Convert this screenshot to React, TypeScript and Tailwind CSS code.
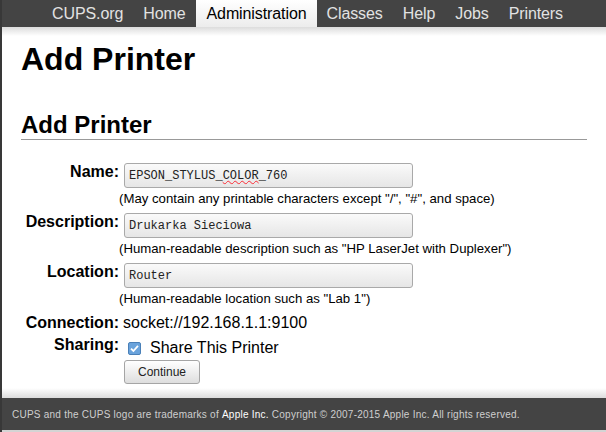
const navItems = ["CUPS.org", "Home", "Administration", "Classes", "Help", "Jobs", "Printers"];

function TextBox({ children }: { children: React.ReactNode }) {
  return (
    <div className="ml-[5px] flex h-[25px] w-[289px] items-center rounded-[3px] border border-[#a9a9a9] bg-gradient-to-b from-[#fafafa] to-[#e6e6e6] pl-[4px] font-['Liberation_Mono',monospace] text-[12px] text-[#222]">
      {children}
    </div>
  );
}

function Field({ label, help, children }: { label: string; help: string; children: React.ReactNode }) {
  return (
    <div className="flex">
      <div className="w-[98px] text-right text-[16px] leading-[18px] font-bold">{label}</div>
      <div className="flex flex-col">
        {children}
        <div className="mt-[3px] text-[13.2px] leading-[15px]">{help}</div>
      </div>
    </div>
  );
}

export default function App() {
  return (
    <div className="flex h-[432px] flex-col border-l-2 border-[#383838] bg-white font-['Liberation_Sans',Arial,sans-serif] leading-[normal] text-black">
      <div className="flex h-[27px] items-stretch bg-[#444] pl-[40px] tracking-[-0.1px]">
        {navItems.map((item) =>
          item === "Administration" ? (
            <div key={item} className="flex items-center bg-gradient-to-b from-white to-[#ececec] pl-[11px] pr-[10px] text-[16px] text-black">
              {item}
            </div>
          ) : (
            <div key={item} className="flex items-center px-[10px] text-[16px] text-[#e2e2e2]">
              {item}
            </div>
          )
        )}
      </div>
      <div className="h-[9px] bg-gradient-to-b from-[#dcdcdc] to-white" />

      <div className="px-[19px]">
        <h1 className="mt-[5px] text-[32px] font-bold">Add Printer</h1>
        <h2 className="mt-[33px] border-b border-[#999] text-[24px] font-bold">Add Printer</h2>

        <div className="mt-[23px] flex flex-col gap-[7px]">
          <Field label="Name:" help={'(May contain any printable characters except "/", "#", and space)'}>
            <TextBox>
              EPSON_STYLUS_<span className="underline decoration-red-500 decoration-wavy decoration-1">COLOR</span>_760
            </TextBox>
          </Field>
          <Field label="Description:" help={'(Human-readable description such as "HP LaserJet with Duplexer")'}>
            <TextBox>Drukarka Sieciowa</TextBox>
          </Field>
          <Field label="Location:" help={'(Human-readable location such as "Lab 1")'}>
            <TextBox>Router</TextBox>
          </Field>
        </div>

        <div className="mt-[8px] flex text-[16px] leading-[18px]">
          <div className="w-[98px] text-right font-bold">Connection:</div>
          <div className="ml-[4px]">socket://192.168.1.1:9100</div>
        </div>

        <div className="mt-[4px] flex text-[16px] leading-[18px]">
          <div className="w-[98px] text-right font-bold">Sharing:</div>
          <div className="ml-[9px] flex items-center gap-[9px]">
            <svg width="13" height="13" viewBox="0 0 13 13" className="mt-[4px]">
              <rect x="0.5" y="0.5" width="12" height="12" rx="1.5" fill="#6aa3dc" stroke="#4a80b8" />
              <path d="M3 6.6 L5.4 9 L10 3.8" fill="none" stroke="white" strokeWidth="1.8" />
            </svg>
            <span className="mt-[3px]">Share This Printer</span>
          </div>
        </div>

        <div className="mt-[3px] flex">
          <div className="w-[98px]" />
          <button className="ml-[5px] h-[24px] w-[76px] rounded-[3px] border border-[#a5a5a5] bg-gradient-to-b from-white to-[#dedede] text-[12px] text-[#222]">
            Continue
          </button>
        </div>
      </div>

      <div className="flex-1" />
      <div className="h-[10px] bg-gradient-to-b from-white to-[#dcdcdc]" />
      <div className="flex h-[32px] items-center bg-[#444] pl-[10px] text-[10px] tracking-[0.24px] text-[#cfcfcf]">
        CUPS and the CUPS logo are trademarks of&nbsp;<span className="text-white">Apple Inc.</span>&nbsp;Copyright © 2007-2015 Apple Inc. All rights reserved.
      </div>
      <div className="h-[2px] bg-[#d4d4d4]" />
    </div>
  );
}
